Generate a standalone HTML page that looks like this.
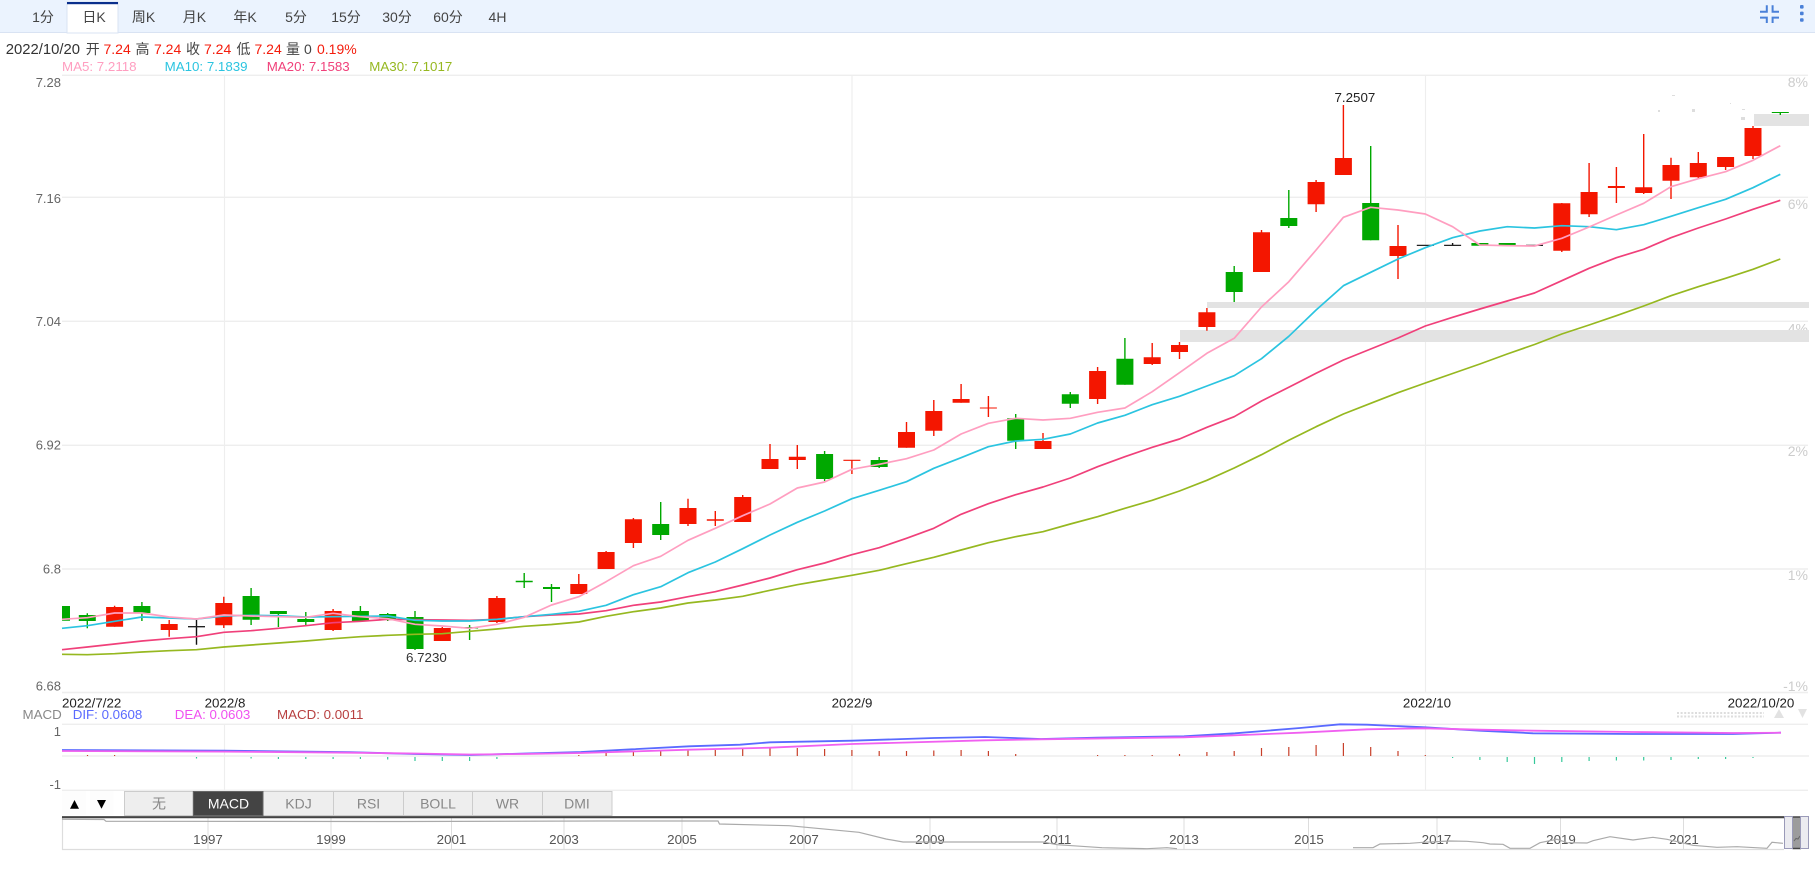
<!DOCTYPE html>
<html><head><meta charset="utf-8"><title>K线图</title>
<style>
html,body{margin:0;padding:0;background:#fff;width:1815px;height:878px;overflow:hidden}
svg{display:block}
text{font-family:"Liberation Sans","Noto Sans CJK SC",sans-serif;font-size:13.33px}
.tab{font-size:14px;fill:#444;text-anchor:middle}
.ax{font-size:13px;fill:#666;text-anchor:end}
.pc{font-size:14px;fill:#ccc;text-anchor:end}
.dt{fill:#222;text-anchor:middle}
.yr{fill:#555;text-anchor:middle;font-size:13.33px}
.bt{font-size:14px;fill:#888;text-anchor:middle}
.h{font-size:14px;fill:#444}
.r{font-size:14px;fill:#f41c0c}
</style></head><body>
<svg width="1815" height="878" viewBox="0 0 1815 878" xmlns="http://www.w3.org/2000/svg">
<rect width="1815" height="878" fill="#fff"/>
<!-- top bar -->
<rect width="1815" height="32" fill="#ebf3fe"/>
<rect y="32" width="1815" height="1" fill="#d9e3f3"/>
<rect x="67" y="2" width="51" height="31" fill="#fff" stroke="#d9e3f3" stroke-width="1"/>
<rect x="67" y="2" width="51" height="2.2" fill="#0a2f8c"/>
<g class="tabs">
<text class="tab" x="43" y="22">1分</text><text class="tab" x="94" y="22">日K</text><text class="tab" x="143.5" y="22">周K</text><text class="tab" x="194.4" y="22">月K</text><text class="tab" x="245" y="22">年K</text><text class="tab" x="296" y="22">5分</text><text class="tab" x="346" y="22">15分</text><text class="tab" x="397" y="22">30分</text><text class="tab" x="448" y="22">60分</text><text class="tab" x="497.5" y="22">4H</text>
</g>
<!-- top icons -->
<path d="M1760 11.8H1766.8V5.3M1779 11.8H1772.6V5.3M1760 17.6H1766.8V23M1779 17.6H1772.6V23" fill="none" stroke="#4a80d8" stroke-width="2"/>
<rect x="1800" y="5" width="3.6" height="3.6" rx="1" fill="#4a80d8"/><rect x="1800" y="11.6" width="3.6" height="3.6" rx="1" fill="#4a80d8"/><rect x="1800" y="18.2" width="3.6" height="3.6" rx="1" fill="#4a80d8"/>
<!-- info -->
<text x="5.7" y="54" style="font-size:15px;fill:#333" textLength="74.3" lengthAdjust="spacingAndGlyphs">2022/10/20</text>
<text class="h" x="85.7" y="54">开</text><text class="r" x="103.5" y="54">7.24</text>
<text class="h" x="135.5" y="54">高</text><text class="r" x="154" y="54">7.24</text>
<text class="h" x="186" y="54">收</text><text class="r" x="204" y="54">7.24</text>
<text class="h" x="236.5" y="54">低</text><text class="r" x="254.5" y="54">7.24</text>
<text class="h" x="286" y="54">量</text><text class="h" x="304" y="54">0</text><text class="r" x="317" y="54">0.19%</text>
<text x="62" y="71" fill="#ff9ec0">MA5: 7.2118</text><text x="164.6" y="71" fill="#2bc4e0">MA10: 7.1839</text><text x="266.7" y="71" fill="#f0407a">MA20: 7.1583</text><text x="369.3" y="71" fill="#96b820">MA30: 7.1017</text>
<!-- grid -->
<path d="M62 75.3H1808M62 197.3H1808M62 321.3H1808M62 445.3H1808M62 569H1808M62 692.5H1808M62 724.3H1808M62 790.3H1808" stroke="#eee" stroke-width="1.4" fill="none"/>
<path d="M62 756H1809" stroke="#eee" stroke-width="1.5" fill="none"/>
<path d="M224.5 75V692M852 75V692M1425.5 75V692M224.5 724V790M852 724V790M1425.5 724V790" stroke="#eee" stroke-width="1.2" fill="none"/>
<!-- axes -->
<text class="ax" x="61" y="87">7.28</text><text class="ax" x="61" y="203">7.16</text><text class="ax" x="61" y="326">7.04</text><text class="ax" x="61" y="449.5">6.92</text><text class="ax" x="61" y="573.5">6.8</text><text class="ax" x="61" y="690.5">6.68</text>
<text class="pc" x="1808" y="87">8%</text><text class="pc" x="1808" y="209">6%</text><text class="pc" x="1808" y="333.5">4%</text><text class="pc" x="1808" y="456">2%</text><text class="pc" x="1808" y="580">1%</text><text class="pc" x="1808" y="691">-1%</text>
<!-- grey bands -->
<rect x="1754" y="114" width="55" height="12" fill="#e3e3e3"/><rect x="1207" y="302" width="602" height="6" fill="#e3e3e3"/><rect x="1180" y="330" width="629" height="12" fill="#e3e3e3"/>
<path d="M1672 95h3v1h-3zM1658 110h2v2h-2zM1692 109h3v3h-3zM1742 109h3v1h-3zM1741 117h4v3h-4zM1730 103h1v1h-1z" fill="#ddd"/>
<!-- wicks -->
<path d="M114.6 605.7V626.7M169.2 620V636.7M223.8 596.7V628M333.1 609V631M442.3 627V641M496.9 596V623M578.8 574V594M606.1 551V569M633.4 518V548M688 498.7V526M715.3 511V526M742.7 495V522M770 444V469M797.3 445V469M851.9 460V474M906.5 422V447.7M933.8 400V436M961.1 384V402.7M988.4 396V417M1043 433V449M1097.6 367V404M1152.2 343V365M1179.5 342V359M1206.9 308V330.7M1261.5 230V272M1316.1 180V212M1343.4 105V175M1398 225V279M1561.8 203V252M1589.1 163V217M1616.4 167V203M1643.7 134V194M1671 157.7V199M1698.3 152V179M1725.6 157V170M1753 126V159" stroke="#f41600" stroke-width="1.4" fill="none"/>
<path d="M87.3 613.3V628.3M141.9 602V621M251.1 588V625M278.4 611V627M305.8 612V625M360.4 606V621M387.7 613V621M415 611V650M469.6 625V640M524.2 573V588M551.5 584V602M660.7 502V540M824.6 451V481M879.2 457V468M1015.7 414V449M1070.3 392V408M1124.9 338V384.7M1234.2 266V302M1288.8 190V228M1370.7 146V240.3M1780.3 112V115" stroke="#00a800" stroke-width="1.4" fill="none"/>
<path d="M196.5 620V644.7M1452.6 243V245.3" stroke="#111" stroke-width="1.4" fill="none"/>
<!-- bodies -->
<path fill="#f41600" d="M106.1 607h17V626.7h-17zM160.7 624h17V630h-17zM215.3 603h17V625.3h-17zM324.6 611h17V630h-17zM433.8 628h17V641h-17zM488.4 598h17V622h-17zM570.3 584h17V594h-17zM597.6 552h17V569h-17zM624.9 519.3h17V543h-17zM679.5 508h17V524h-17zM706.8 519.2h17V520.8h-17zM734.2 497h17V522h-17zM761.5 459h17V469h-17zM788.8 456.7h17V460h-17zM843.4 459.8h17V460.9h-17zM898 432h17V447.7h-17zM925.3 411h17V430.7h-17zM952.6 399h17V402.7h-17zM979.9 407.5h17V408.5h-17zM1034.5 441h17V449h-17zM1089.1 371h17V399h-17zM1143.7 357.3h17V364h-17zM1171 345h17V352h-17zM1198.4 312.3h17V327h-17zM1253 232.3h17V272h-17zM1307.6 182h17V204.3h-17zM1334.9 158h17V175h-17zM1389.5 246h17V256h-17zM1553.3 203.3h17V250.7h-17zM1580.6 192h17V214.3h-17zM1607.9 186h17V188h-17zM1635.2 187.3h17V193h-17zM1662.5 165h17V180.7h-17zM1689.8 163h17V177.3h-17zM1717.1 157h17V167h-17zM1744.5 128h17V156h-17z"/>
<path fill="#00a800" d="M62 606h8V620.7h-8zM78.8 615h17V621h-17zM133.4 606h17V613h-17zM242.6 596h17V619.7h-17zM269.9 611h17V614h-17zM297.3 619h17V622h-17zM351.9 611h17V621h-17zM379.2 614h17V620h-17zM406.5 617h17V649h-17zM461.1 627h17V628.5h-17zM515.7 580.7h17V582.3h-17zM543 587h17V589h-17zM652.2 524h17V535h-17zM816.1 454h17V479h-17zM870.7 460h17V467h-17zM1007.2 418.3h17V440.7h-17zM1061.8 394.3h17V403.7h-17zM1116.4 358.7h17V384.7h-17zM1225.7 272h17V292h-17zM1280.3 218h17V226h-17zM1362.2 203h17V240.3h-17zM1471.4 243h17V245.7h-17zM1498.7 243h17V245.7h-17zM1771.8 112h17V113h-17z"/>
<path fill="#222" d="M188 626h17V627.4h-17zM1416.8 244.8h17V246h-17zM1444.1 244.8h17V246h-17zM1526 244.8h17V246h-17z"/>
<!-- MA lines -->
<g fill="none" stroke-width="1.7" stroke-linejoin="round">
<polyline stroke="#96b820" points="62,654.3 87.3,654.7 114.6,653.7 141.9,652 169.2,650.7 196.5,649.7 223.8,647 251.1,645 278.4,643 305.8,641 333.1,638.7 360.4,636.7 387.7,635.3 415,634.3 442.3,633.7 469.6,631.3 496.9,629 524.2,626.3 551.5,624.5 578.8,622 606.1,616.3 633.4,611.7 660.7,608 688,603 715.3,600 742.7,596.3 770,590.3 797.3,584.7 824.6,580 851.9,575.3 879.2,570.3 906.5,563.7 933.8,557.3 961.1,550 988.4,542.7 1015.7,536.7 1043,531.7 1070.3,524 1097.6,516.7 1124.9,508.3 1152.2,500.3 1179.5,491 1206.9,480.3 1234.2,468 1261.5,454.7 1288.8,440.3 1316.1,426.7 1343.4,414 1370.7,403.3 1398,392.7 1425.3,383 1452.6,373.5 1479.9,364 1507.2,354 1534.5,344.5 1561.8,334 1589.1,325 1616.4,315.7 1643.7,306 1671,295.7 1698.3,286.7 1725.6,278.3 1753,269.3 1780.3,259"/>
<polyline stroke="#f0407a" points="62,649.7 87.3,647 114.6,644 141.9,641 169.2,638.7 196.5,636.7 223.8,632.3 251.1,630.7 278.4,628.3 305.8,625.7 333.1,622.7 360.4,621.3 387.7,619.3 415,619.7 442.3,620 469.6,620.3 496.9,619.3 524.2,616.7 551.5,615 578.8,614 606.1,610.7 633.4,605.3 660.7,602 688,596.7 715.3,591.7 742.7,585 770,578 797.3,569.7 824.6,563 851.9,554.7 879.2,547.7 906.5,538.3 933.8,528.3 961.1,514.3 988.4,503.7 1015.7,494.7 1043,487 1070.3,478 1097.6,466.7 1124.9,456.7 1152.2,447.3 1179.5,439 1206.9,427.3 1234.2,416.7 1261.5,401 1288.8,387.3 1316.1,373.3 1343.4,360 1370.7,349 1398,338 1425.3,326 1452.6,317.3 1479.9,309 1507.2,301 1534.5,293 1561.8,280.7 1589.1,268.3 1616.4,257.7 1643.7,249.3 1671,237.7 1698.3,228 1725.6,219 1753,209.3 1780.3,200.3"/>
<polyline stroke="#2bc4e0" points="62,628.3 87.3,625.7 114.6,621.3 141.9,617 169.2,618 196.5,619 223.8,616 251.1,615.3 278.4,615.7 305.8,617 333.1,616.7 360.4,616.3 387.7,616 415,620.3 442.3,621 469.6,621 496.9,619.3 524.2,616.7 551.5,614.3 578.8,611.3 606.1,605.3 633.4,594.7 660.7,586.7 688,572.7 715.3,562 742.7,548.7 770,535 797.3,522.3 824.6,511 851.9,498.7 879.2,490.3 906.5,481.7 933.8,468.3 961.1,457.7 988.4,446.7 1015.7,441 1043,439.3 1070.3,434 1097.6,423 1124.9,415.3 1152.2,404.7 1179.5,396.3 1206.9,386 1234.2,375.7 1261.5,358.7 1288.8,336.3 1316.1,310 1343.4,285.7 1370.7,272.3 1398,259 1425.3,247.7 1452.6,237.7 1479.9,231 1507.2,226.7 1534.5,228 1561.8,225.7 1589.1,226.7 1616.4,229.7 1643.7,224.7 1671,216.3 1698.3,207.7 1725.6,199.3 1753,187.7 1780.3,174.3"/>
<polyline stroke="#ff9ec0" points="62,619.3 87.3,617.7 114.6,613 141.9,613 169.2,617 196.5,619 223.8,615 251.1,616 278.4,616.7 305.8,617.3 333.1,613.3 360.4,616.7 387.7,618.7 415,624.3 442.3,626 469.6,628.3 496.9,624.3 524.2,617.3 551.5,605 578.8,596.7 606.1,581.7 633.4,565.7 660.7,556.3 688,540.3 715.3,528.3 742.7,515.7 770,504 797.3,488 824.6,482 851.9,469.3 879.2,464.3 906.5,458.7 933.8,450 961.1,434 988.4,423.3 1015.7,418.3 1043,420 1070.3,418.3 1097.6,412.3 1124.9,408 1152.2,391.7 1179.5,372.7 1206.9,353.3 1234.2,338.3 1261.5,307 1288.8,281.7 1316.1,250 1343.4,217.3 1370.7,207.3 1398,210 1425.3,214 1452.6,226.7 1479.9,245 1507.2,245.7 1534.5,246 1561.8,238.3 1589.1,227 1616.4,215 1643.7,203.3 1671,186.7 1698.3,178.7 1725.6,171.7 1753,160.3 1780.3,145.7"/>
</g>
<text x="406" y="662" fill="#333" style="font-size:13.33px">6.7230</text>
<text x="1334.5" y="102" fill="#222" style="font-size:13.33px">7.2507</text>
<!-- dates -->
<text x="62" y="707.5" fill="#222">2022/7/22</text><text class="dt" x="225" y="707.5">2022/8</text><text class="dt" x="852" y="707.5">2022/9</text><text class="dt" x="1427" y="707.5">2022/10</text><text class="dt" x="1761" y="707.5">2022/10/20</text>
<!-- MACD legend -->
<text x="22.5" y="719" fill="#888">MACD</text><text x="72.7" y="719" fill="#5a6aff">DIF: 0.0608</text><text x="174.7" y="719" fill="#f050f0">DEA: 0.0603</text><text x="277" y="719" fill="#b84040">MACD: 0.0011</text>
<text class="ax" x="61" y="736">1</text><text class="ax" x="61" y="789">-1</text>
<!-- dotted + triangles -->
<path d="M1677 713H1764M1677 716.5H1764" stroke="#ddd" stroke-width="2" stroke-dasharray="2 1.6" fill="none"/>
<polygon points="1774,718 1784,718 1779,709" fill="#e2e2e2"/><polygon points="1798,709 1807,709 1802.5,718" fill="#e2e2e2"/>
<!-- histogram -->
<g stroke-width="1.2" fill="none">
<path stroke="#c8402a" d="M87.5 755V756M114.6 755V756M578.8 755V756M606.1 753V756M633.4 751V756M660.7 751V756M688 750V756M715.3 750V756M742.7 749V756M770 748V756M797.3 748V756M824.6 749V756M851.9 750V756M879.2 751V756M906.5 751V756M933.8 750.5V756M961.1 750V756M988.4 751V756M1015.7 754V756M1097.6 755V756M1124.9 755V756M1152.2 755V756M1179.5 754V756M1206.9 752V756M1234.2 751V756M1261.5 748V756M1288.8 747V756M1316.1 745V756M1343.4 743V756M1370.7 747V756M1398 751V756M1425.3 755V756"/>
<path stroke="#36c89a" d="M196.5 757V758.5M251.1 757V758.5M278.4 757V759M305.8 757V759M333.1 757V759M360.4 757V759M387.7 757V759.5M415 757V761M442.3 757V761M469.6 757V761M496.9 757V759M1452.6 757V758M1479.9 757V760M1507.2 757V762M1534.5 757V764M1561.8 757V762M1589.1 757V761M1616.4 757V760.5M1643.7 757V760.5M1671 757V760M1698.3 757V759M1725.6 757V759M1753 757V758"/>
</g>
<!-- MACD lines -->
<g fill="none" stroke-width="1.8">
<polyline stroke="#5a6aff" points="62,750 224,750.6 350,752.2 415,754 470,755 525,753.5 581,752 632,749.3 689,746.3 740,744.7 770,742.3 852,740.7 934,738 985,737 1041,739 1097,737.7 1184,736.3 1235,733.3 1300,728 1340,724.3 1367,724.7 1425,727.3 1480,730.7 1533,733.3 1633,734 1733,734 1781,732.7"/>
<polyline stroke="#f060f0" points="62,751 224,751.6 350,752.7 415,753.5 470,754.5 525,754 581,753 689,749.7 770,747.7 852,744 985,740.3 1041,739.3 1184,737.3 1300,732.7 1367,729.3 1425,728.3 1480,729.7 1533,730.7 1633,732 1733,733 1781,732.7"/>
</g>
<!-- buttons -->
<rect x="62" y="791" width="24" height="24" fill="#fdfdfd"/><rect x="90" y="791" width="23.5" height="24" fill="#fdfdfd"/>
<polygon points="70,808.7 79,808.7 74.5,800" fill="#000"/><polygon points="97,800 106,800 101.5,808.7" fill="#000"/>
<rect x="124.5" y="791.5" width="487.5" height="24" fill="#eee" stroke="#ccc"/>
<rect x="193.3" y="791.5" width="69.7" height="24" fill="#444" stroke="#666"/>
<path d="M333.5 791.5V815.5M403.5 791.5V815.5M472.5 791.5V815.5M542.5 791.5V815.5" stroke="#ccc" fill="none"/>
<text class="bt" x="159" y="808.5">无</text><text class="bt" x="228.5" y="808.5" style="fill:#fff">MACD</text><text class="bt" x="298.5" y="808.5">KDJ</text><text class="bt" x="368.5" y="808.5">RSI</text><text class="bt" x="438" y="808.5">BOLL</text><text class="bt" x="507.5" y="808.5">WR</text><text class="bt" x="577" y="808.5">DMI</text>
<!-- navigator -->
<path d="M208 818V849M331 818V849M451.5 818V849M564 818V849M682 818V849M804 818V849M930 818V849M1057 818V849M1184 818V849M1308.5 818V849M1437 818V849M1560.5 818V849M1683.5 818V849" stroke="#ddd" fill="none"/>
<text class="yr" x="208" y="844">1997</text><text class="yr" x="331" y="844">1999</text><text class="yr" x="451.5" y="844">2001</text><text class="yr" x="564" y="844">2003</text><text class="yr" x="682" y="844">2005</text><text class="yr" x="804" y="844">2007</text><text class="yr" x="930" y="844">2009</text><text class="yr" x="1057" y="844">2011</text><text class="yr" x="1184" y="844">2013</text><text class="yr" x="1309" y="844">2015</text><text class="yr" x="1436.5" y="844">2017</text><text class="yr" x="1561" y="844">2019</text><text class="yr" x="1684" y="844">2021</text>
<path d="M62.5 817V849.5H1784" stroke="#ddd" stroke-width="1.2" fill="none"/>
<polyline fill="none" stroke="#aaa" stroke-width="1.2" points="62,819.3 104,819.5 106,821.3 400,821.5 600,821 718,821 719.5,824 789,825.7 859,832.3 886,839 903,842 1043,842 1057,844.7 1102,847.7 1147,848.7 1167,847.7 1177,848.7"/>
<polyline fill="none" stroke="#aaa" stroke-width="1.2" points="1353,847.7 1373,847.7 1380,844 1410,843.3 1423,842.3 1450,841 1467,841.3 1483,842.7 1490,844 1503,844.3 1510,848.3 1530,848.3 1540,842.7 1557,839.3 1567,842.7 1587,843 1593,840.7 1610,836.7 1633,840 1653,837.3 1667,839.3 1693,845.3 1717,847.3 1737,846.7 1767,848.3 1772,842.3 1783,843.3"/>
<path d="M62 817.2H1784" stroke="#444" stroke-width="2.2" fill="none"/>
<rect x="1792.5" y="817" width="8.5" height="31.5" fill="#9c9c9c"/>
<path d="M1792.5 817H1801M1792.5 848.5H1801" stroke="#444" stroke-width="1.4" fill="none"/>
<path d="M1794 841L1796 838.5L1798 839L1800 836" stroke="#666" fill="none"/>
<rect x="1784.5" y="816.5" width="8" height="32" fill="#ebebf0" stroke="#9a9ab8"/>
<rect x="1800.5" y="816.5" width="8" height="32" fill="#ebebf0" stroke="#9a9ab8"/>
</svg>
</body></html>
